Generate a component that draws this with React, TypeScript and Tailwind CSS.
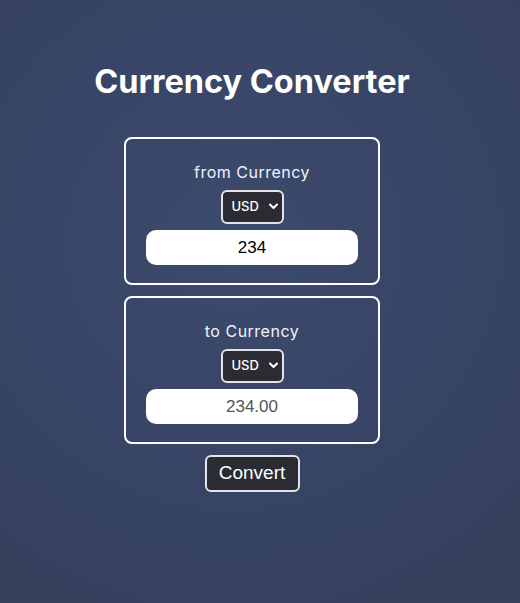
import React, { useState } from "react";

const currencies = ["USD", "EUR", "INR", "GBP", "JPY"];

function CurrencyBox({
  label,
  currency,
  onCurrency,
  amount,
  readOnly,
}: {
  label: string;
  currency: string;
  onCurrency: (c: string) => void;
  amount: string;
  readOnly?: boolean;
}) {
  return (
    <div className="w-[256px] h-[148px] border-2 border-white rounded-lg flex flex-col items-center pt-[23px]">
      <div className="text-[16px] leading-[20px] text-[#eef4ff] font-['Inter',sans-serif] tracking-[0.5px]">{label}</div>
      <div className="relative mt-[8px]">
        <select
          value={currency}
          onChange={(e) => onCurrency(e.target.value)}
          className="appearance-none w-[63px] h-[34px] bg-[#2b2c33] border-2 border-[#e5e5e5] rounded-[6px] text-white text-[13px] font-['Inter',sans-serif] font-medium pl-[9px] outline-none"
        >
          {currencies.map((c) => (
            <option key={c}>{c}</option>
          ))}
        </select>
        <svg
          className="absolute right-[6px] top-[13px] pointer-events-none"
          width="9"
          height="7"
          viewBox="0 0 9 7"
          fill="none"
        >
          <path d="M1 1.5 L4.5 5 L8 1.5" stroke="white" strokeWidth="2" strokeLinecap="round" strokeLinejoin="round" />
        </svg>
      </div>
      <input
        value={amount}
        readOnly={readOnly}
        onChange={() => {}}
        className={`mt-[6px] w-[212px] h-[35px] bg-white rounded-[10px] text-center text-[17px] font-['Liberation_Sans',Arial,sans-serif] outline-none ${
          readOnly ? "text-[#555]" : "text-black"
        }`}
      />
    </div>
  );
}

export default function App() {
  const [from, setFrom] = useState("USD");
  const [to, setTo] = useState("USD");
  const [amount] = useState("234");

  return (
    <div className="min-h-[603px] w-full bg-[radial-gradient(circle_at_45%_40%,#3c4a6c_0%,#384566_45%,#343f5a_100%)] pr-[16px]">
      <div className="flex flex-col items-center pt-[60px]">
        <h1 className="text-[32.5px] leading-[44px] font-bold text-white font-['Inter',sans-serif] tracking-[0px]">
          Currency Converter
        </h1>
        <div className="mt-[33px] flex flex-col items-center gap-[11px]">
          <CurrencyBox label="from Currency" currency={from} onCurrency={setFrom} amount={amount} />
          <CurrencyBox label="to Currency" currency={to} onCurrency={setTo} amount="234.00" readOnly />
        </div>
        <button className="mt-[11px] w-[95px] h-[37px] bg-[#2b2c33] border-2 border-[#e5e5e5] rounded-[6px] text-white text-[19px] font-['Liberation_Sans',Arial,sans-serif]">
          Convert
        </button>
      </div>
    </div>
  );
}
